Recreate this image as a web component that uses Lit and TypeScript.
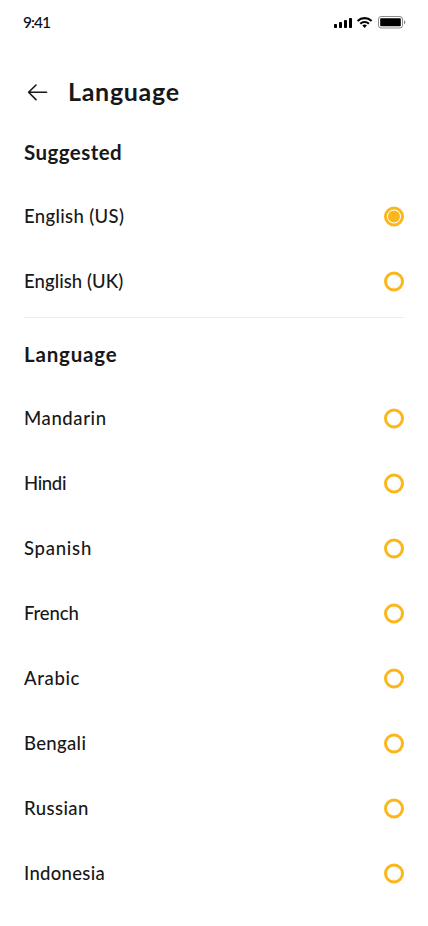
import { LitElement, html, svg, css } from "lit";
import { customElement, property } from "lit/decorators.js";
import { styleMap } from "lit/directives/style-map.js";

interface Language {
  name: string;
  tracking: number;
  selected?: boolean;
}

const suggested: Language[] = [
  { name: "English (US)", tracking: 0.35, selected: true },
  { name: "English (UK)", tracking: 0.07 },
];

const languages: Language[] = [
  { name: "Mandarin", tracking: 0.6 },
  { name: "Hindi", tracking: -0.35 },
  { name: "Spanish", tracking: 0.75 },
  { name: "French", tracking: -0.12 },
  { name: "Arabic", tracking: 0.65 },
  { name: "Bengali", tracking: 0.34 },
  { name: "Russian", tracking: 0.42 },
  { name: "Indonesia", tracking: 0.3 },
];

@customElement("status-bar")
export class StatusBar extends LitElement {
  static styles = css`
    :host {
      display: flex;
      justify-content: space-between;
      height: 44px;
      box-sizing: border-box;
      padding: 0 22px 0 23px;
      align-items: center;
    }
    .time {
      font-size: 15.5px;
      font-weight: 500;
      line-height: 20px;
      letter-spacing: -1px;
      color: #09101d;
    }
    svg {
      display: block;
    }
  `;
  render() {
    return html`
      <span class="time">9:41</span>
      <svg width="72" height="14" viewBox="0 0 72 14" fill="#000">
        <rect x="0" y="9" width="3" height="4" rx="0.8" />
        <rect x="5" y="7" width="3" height="6" rx="0.8" />
        <rect x="10" y="5" width="3" height="8" rx="0.8" />
        <rect x="15" y="3" width="3" height="10" rx="0.8" />
        <g fill="none" stroke="#000" stroke-width="2.1">
          <path d="M23.6 5.9a10.2 10.2 0 0 1 14 0" />
          <path d="M26.3 8.7a6.3 6.3 0 0 1 8.6 0" />
        </g>
        <path d="M30.6 13l-2.3-2.4a3.4 3.4 0 0 1 4.6 0z" />
        <rect x="44.5" y="1.5" width="24" height="11.5" rx="2.6" fill="none" stroke="#000" stroke-opacity="0.45" />
        <rect x="46.2" y="3.2" width="20.6" height="8.1" rx="0.8" />
        <path d="M70 5.3v4a2.2 2.2 0 0 0 0-4z" opacity="0.5" />
      </svg>
    `;
  }
}

@customElement("language-row")
export class LanguageRow extends LitElement {
  @property({ type: String }) name = "";
  @property({ type: Number }) tracking = 0;
  @property({ type: Boolean }) selected = false;

  static styles = css`
    :host {
      display: flex;
      align-items: center;
      justify-content: space-between;
      height: 65px;
    }
    .name {
      font-size: 18.5px;
      font-weight: 500;
      line-height: 24px;
      padding-bottom: 1px;
      color: #181818;
      white-space: nowrap;
    }
    svg {
      display: block;
    }
  `;
  render() {
    return html`
      <span class="name" style=${styleMap({ letterSpacing: `${this.tracking}px` })}>${this.name}</span>
      <svg width="20" height="21" viewBox="0 0 20 21">
        <circle cx="10" cy="10.5" r="8.5" fill="none" stroke="#fab71c" stroke-width="3" />
        ${this.selected ? svg`<circle cx="10" cy="10.5" r="6" fill="#fab71c" />` : null}
      </svg>
    `;
  }
}

@customElement("app-root")
export class AppRoot extends LitElement {
  static styles = css`
    :host {
      display: block;
      min-height: 926px;
      background: #fff;
      font-family: Lato, "Open Sans", sans-serif;
      color: #181818;
    }
    header {
      display: flex;
      align-items: center;
      height: 48px;
      margin-top: 24px;
      padding-left: 24px;
      gap: 16px;
    }
    header svg {
      display: block;
    }
    h1,
    h2 {
      margin: 0;
      font-weight: 700;
    }
    h1 {
      font-size: 25px;
      line-height: 32px;
      padding-bottom: 2px;
      letter-spacing: 0.7px;
    }
    h2 {
      font-size: 20.5px;
      line-height: 24px;
      letter-spacing: 0.8px;
    }
    h2.suggested {
      letter-spacing: 0.45px;
    }
    main {
      padding: 24px 24px 0;
    }
    .rows {
      margin-top: 20px;
    }
    .divider {
      height: 1px;
      margin: 3px 0 24px;
      background: #ececec;
    }
  `;
  private rows(items: Language[]) {
    return html`<div class="rows">
      ${items.map(
        (l) => html`<language-row .name=${l.name} .tracking=${l.tracking} .selected=${!!l.selected}></language-row>`,
      )}
    </div>`;
  }
  render() {
    return html`
      <status-bar></status-bar>
      <header>
        <svg width="28" height="28" viewBox="0 0 28 28" fill="none" stroke="#181818" stroke-width="1.6" stroke-linecap="round" stroke-linejoin="round">
          <path d="M22.6 14.3H4.6M12 7L4.6 14.3l7.4 7.3" />
        </svg>
        <h1>Language</h1>
      </header>
      <main>
        <h2 class="suggested">Suggested</h2>
        ${this.rows(suggested)}
        <div class="divider"></div>
        <h2>Language</h2>
        ${this.rows(languages)}
      </main>
    `;
  }
}
